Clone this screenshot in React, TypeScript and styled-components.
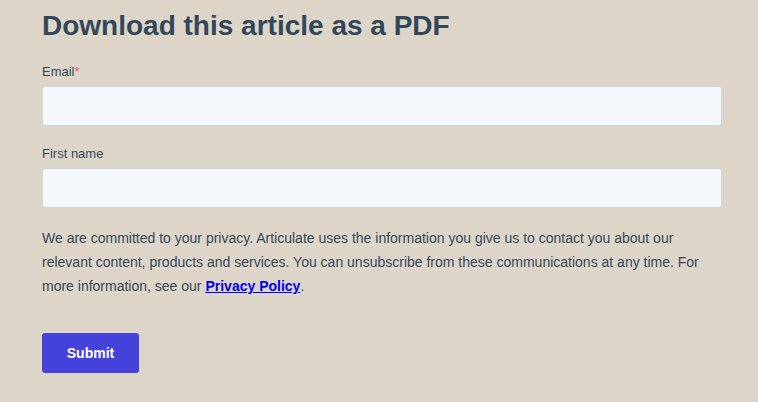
import * as React from "react";
import styled, { createGlobalStyle } from "styled-components";

const GlobalStyle = createGlobalStyle`
  html, body {
    margin: 0;
    padding: 0;
    background: #ded5c9;
  }
  body {
    font-family: "Liberation Sans", Arial, Helvetica, sans-serif;
    color: #33475b;
  }
`;

const Page = styled.div`
  padding: 6px 36px 30px 42px;
  min-height: 402px;
  box-sizing: border-box;
`;

const Title = styled.h1`
  margin: 0 0 16px;
  font-size: 28px;
  line-height: 40px;
  font-weight: bold;
  color: #33475b;
`;

const Field = styled.div`
  margin-bottom: 18px;
`;

const Label = styled.label`
  display: block;
  font-size: 13px;
  line-height: 20px;
  margin-bottom: 4px;
  color: #33475b;
`;

const Required = styled.span`
  color: #f2545b;
`;

const Input = styled.input`
  display: block;
  width: 100%;
  height: 40px;
  box-sizing: border-box;
  background: #f5f8fa;
  border: 1px solid #cbd6e2;
  border-radius: 3px;
  padding: 0 10px;
  font-family: inherit;
  font-size: 14px;
  color: #33475b;
  outline: none;
`;

const Notice = styled.p`
  margin: 18px 0 0;
  font-size: 14px;
  line-height: 24px;
  color: #33475b;
`;

const PolicyLink = styled.a`
  color: #0000ee;
  font-weight: bold;
  text-decoration: underline;
`;

const Submit = styled.button`
  margin-top: 35px;
  width: 97px;
  height: 40px;
  border: none;
  border-radius: 3px;
  background: #4541db;
  color: #fff;
  font-family: inherit;
  font-size: 14px;
  font-weight: bold;
  cursor: pointer;
`;

export default function App() {
  return (
    <Page>
      <GlobalStyle />
      <Title>Download this article as a PDF</Title>
      <Field>
        <Label>
          Email<Required>*</Required>
        </Label>
        <Input type="email" />
      </Field>
      <Field>
        <Label>First name</Label>
        <Input type="text" />
      </Field>
      <Notice>
        We are committed to your privacy. Articulate uses the information you
        give us to contact you about our relevant content, products and
        services. You can unsubscribe from these communications at any time.
        For more information, see our{" "}
        <PolicyLink href="#">Privacy Policy</PolicyLink>.
      </Notice>
      <Submit type="submit">Submit</Submit>
    </Page>
  );
}
